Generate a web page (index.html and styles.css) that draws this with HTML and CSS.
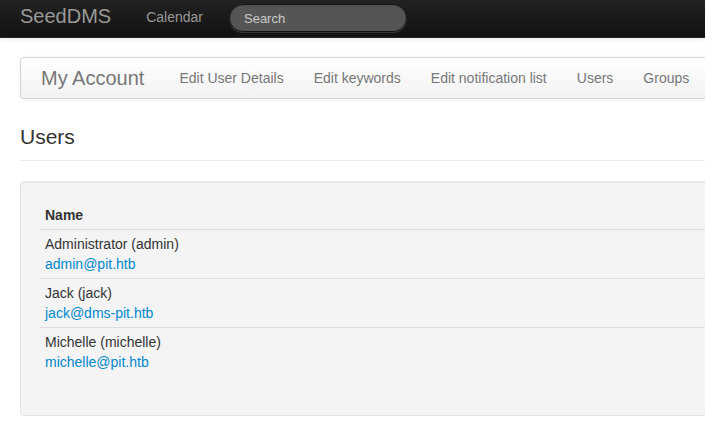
FILE: index.html
```html
<!DOCTYPE html>
<html>
<head>
<meta charset="utf-8">
<link rel="stylesheet" href="styles.css">
</head>
<body>
<div class="navbar">
  <a class="brand" href="#">SeedDMS</a>
  <a class="nav-link" href="#">Calendar</a>
  <form class="search-form"><input class="search-query" type="text" placeholder="Search"></form>
</div>
<div class="content">
  <div class="subnav">
    <a class="subnav-brand" href="#">My Account</a>
    <a class="subnav-link" href="#">Edit User Details</a>
    <a class="subnav-link" href="#">Edit keywords</a>
    <a class="subnav-link" href="#">Edit notification list</a>
    <a class="subnav-link" href="#">Users</a>
    <a class="subnav-link" href="#">Groups</a>
  </div>
  <h3 class="page-header">Users</h3>
  <div class="well">
    <table class="table">
      <thead><tr><th>Name</th></tr></thead>
      <tbody>
        <tr><td>Administrator (admin)<br><a href="#">admin@pit.htb</a></td></tr>
        <tr><td>Jack (jack)<br><a href="#">jack@dms-pit.htb</a></td></tr>
        <tr><td>Michelle (michelle)<br><a href="#">michelle@pit.htb</a></td></tr>
      </tbody>
    </table>
  </div>
</div>
</body>
</html>
```
FILE: styles.css
```css
html, body {
  margin: 0;
  padding: 0;
  overflow: hidden;
  background: #fff;
}
body {
  font-family: "Liberation Sans", Arial, sans-serif;
  font-size: 14px;
  line-height: 20px;
  color: #333;
}
a { text-decoration: none; color: #0088cc; }

.navbar {
  height: 37px;
  border-bottom: 1px solid #252525;
  background: linear-gradient(#222, #111);
  display: flex;
  align-items: flex-start;
  padding-left: 20px;
  box-shadow: 0 1px 6px rgba(0,0,0,0.1);
}
.brand {
  font-size: 20px;
  line-height: 20px;
  color: #999;
  padding: 6px 20px 10px 0;
}
.nav-link {
  color: #999;
  padding: 7px 15px 9px 15px;
  line-height: 20px;
}
.search-form {
  margin: 4px 0 0 11px;
}
.search-query {
  box-sizing: border-box;
  width: 178px;
  height: 28px;
  border-radius: 15px;
  border: 1px solid #151515;
  background: #555;
  color: #ccc;
  font-family: "Liberation Sans", Arial, sans-serif;
  font-size: 13px;
  padding: 4px 14px;
  box-shadow: inset 0 1px 2px rgba(0,0,0,0.1), 0 1px 0 rgba(255,255,255,0.15);
  outline: none;
}
.search-query::placeholder { color: #ccc; }

.content {
  width: 1000px;
  padding: 19px 20px 0 20px;
}
.subnav {
  height: 40px;
  border: 1px solid #d4d4d4;
  border-radius: 4px;
  background: linear-gradient(#ffffff, #f2f2f2);
  box-shadow: 0 1px 4px rgba(0,0,0,0.065);
  display: flex;
  align-items: flex-start;
  padding-left: 20px;
}
.subnav-brand {
  font-size: 20px;
  line-height: 20px;
  color: #777;
  padding: 10px 20px 10px 0;
}
.subnav-link {
  color: #777;
  padding: 10px 15px;
  line-height: 20px;
}
.page-header {
  margin: 12px 0 20px 0;
  padding: 12px 0 9px 0;
  border-bottom: 1px solid #eee;
  font-size: 21px;
  font-weight: normal;
  line-height: 28px;
  color: #333;
}
.well {
  background: #f4f4f4;
  border: 1px solid #e3e3e3;
  border-radius: 4px;
  padding: 19px;
  box-shadow: inset 0 1px 1px rgba(0,0,0,0.05);
}
.table {
  width: 100%;
  border-collapse: collapse;
  margin-bottom: 20px;
}
.table th, .table td {
  text-align: left;
  padding: 4px 5px;
  line-height: 20px;
  vertical-align: top;
}
.table th { font-weight: bold; }
.table td { border-top: 1px solid #ddd; }
```
